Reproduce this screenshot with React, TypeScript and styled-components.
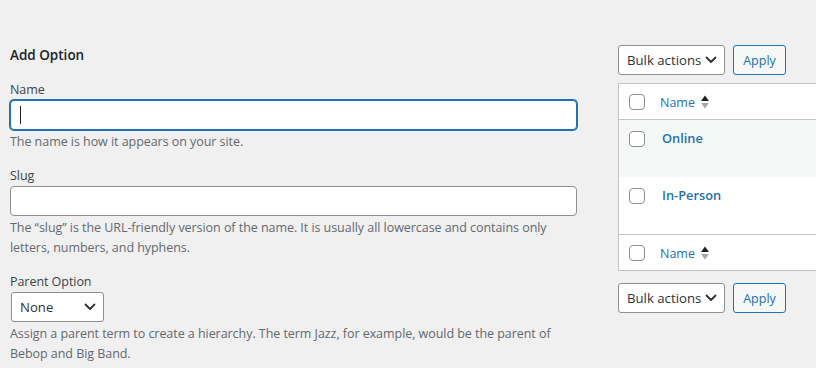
import React from "react";
import styled, { createGlobalStyle } from "styled-components";

const Global = createGlobalStyle`
  html, body { margin: 0; padding: 0; background: #f0f0f1; overflow: hidden; }
  body { font-family: "Open Sans", "Noto Sans", sans-serif; color: #3c434a; font-size: 12.5px; }
  * { box-sizing: border-box; }
`;

const Page = styled.div`
  display: grid;
  grid-template-columns: 567px 320px;
  column-gap: 41px;
  padding: 45px 0 0 10px;
  width: 1000px;
  height: 368px;
`;

const LeftCol = styled.div`
  display: flex;
  flex-direction: column;
`;

const Heading = styled.h2`
  margin: 0 0 14px;
  font-size: 13.5px;
  font-weight: 600;
  line-height: 20px;
  color: #1d2327;
`;

const Field = styled.div`
  display: flex;
  flex-direction: column;
  margin-bottom: 13px;
`;

const Label = styled.label`
  display: block;
  font-size: 12.5px;
  line-height: 20px;
  margin-top: 1px;
  margin-bottom: 0;
  letter-spacing: -0.05px;
`;

const TextInput = styled.div<{ $focus?: boolean }>`
  position: relative;
  height: 30px;
  width: 567px;
  background: #fff;
  border-radius: 4px;
  border: 1px solid ${(p) => (p.$focus ? "#2271b1" : "#8c8f94")};
  box-shadow: ${(p) => (p.$focus ? "0 0 0 1px #2271b1" : "none")};
`;

const Caret = styled.span`
  position: absolute;
  left: 9px;
  top: 5px;
  width: 1px;
  height: 18px;
  background: #1d2327;
`;

const Desc = styled.p`
  margin: 2px 0 0;
  font-size: 12.5px;
  line-height: 20px;
  letter-spacing: -0.05px;
  color: #646970;
  white-space: nowrap;
`;

const SelectBox = styled.div<{ $w: number; $ml?: number }>`
  display: flex;
  align-items: center;
  justify-content: space-between;
  width: ${(p) => p.$w}px;
  margin-left: ${(p) => p.$ml ?? 0}px;
  height: 30px;
  padding: 0 7px 0 8px;
  background: #fff;
  border: 1px solid #8c8f94;
  border-radius: 3px;
  font-size: 13.2px;
  color: #2c3338;
  white-space: nowrap;
`;

const RightCol = styled.div`
  display: flex;
  flex-direction: column;
`;

const TableNav = styled.div<{ $mt?: number }>`
  display: flex;
  gap: 8px;
  height: 30px;
  margin-top: ${(p) => p.$mt ?? 0}px;
`;

const ApplyButton = styled.button`
  width: 53px;
  height: 30px;
  padding: 0;
  background: #f6f7f7;
  border: 1px solid #2271b1;
  border-radius: 3px;
  color: #2271b1;
  font-family: inherit;
  font-size: 12.5px;
`;

const Table = styled.div`
  margin-top: 8px;
  border: 1px solid #c3c4c7;
  background: #fff;
  display: flex;
  flex-direction: column;
`;

const HeadRow = styled.div<{ $top?: boolean }>`
  display: flex;
  align-items: center;
  height: 36px;
  padding: 1px 0 0 10px;
  border-top: ${(p) => (p.$top ? "1px solid #c3c4c7" : "none")};
  border-bottom: ${(p) => (p.$top ? "none" : "1px solid #c3c4c7")};
`;

const BodyRow = styled.div<{ $alt?: boolean }>`
  display: flex;
  align-items: flex-start;
  height: 57px;
  padding: 11px 0 0 10px;
  background: ${(p) => (p.$alt ? "#f6f7f7" : "#fff")};
`;

const Check = styled.span`
  display: inline-block;
  width: 16px;
  height: 16px;
  border: 1px solid #8c8f94;
  border-radius: 4px;
  background: #fff;
  flex: none;
`;

const SortLink = styled.span`
  display: flex;
  align-items: center;
  gap: 6px;
  margin-left: 15px;
  color: #2271b1;
  font-size: 12.5px;
`;

const RowTitle = styled.span`
  margin-left: 17px;
  margin-top: -3px;
  color: #2271b1;
  font-weight: 600;
  font-size: 12.8px;
  line-height: 20px;
`;

const Chevron = () => (
  <svg width="12" height="8" viewBox="0 0 12 8" fill="none">
    <path d="M1.5 1.5 L6 6 L10.5 1.5" stroke="#2c3338" strokeWidth="1.8" strokeLinecap="round" strokeLinejoin="round" />
  </svg>
);

const SortIcon = () => (
  <svg width="8" height="14" viewBox="0 0 8 14">
    <path d="M4 0.5 L8 6 L0 6 Z" fill="#1d2327" />
    <path d="M4 13.5 L8 8 L0 8 Z" fill="#a7aaad" />
  </svg>
);

const BulkNav = ({ mt }: { mt?: number }) => (
  <TableNav $mt={mt}>
    <SelectBox $w={107}>
      <span>Bulk actions</span>
      <Chevron />
    </SelectBox>
    <ApplyButton>Apply</ApplyButton>
  </TableNav>
);

export default function App() {
  return (
    <>
      <Global />
      <Page>
        <LeftCol>
          <Heading>Add Option</Heading>
          <Field>
            <Label>Name</Label>
            <TextInput $focus>
              <Caret />
            </TextInput>
            <Desc>The name is how it appears on your site.</Desc>
          </Field>
          <Field>
            <Label>Slug</Label>
            <TextInput />
            <Desc>
              The “slug” is the URL-friendly version of the name. It is usually all lowercase and contains only
              <br />
              letters, numbers, and hyphens.
            </Desc>
          </Field>
          <Field>
            <Label>Parent Option</Label>
            <SelectBox $w={93} $ml={1}>
              <span>None</span>
              <Chevron />
            </SelectBox>
            <Desc>
              Assign a parent term to create a hierarchy. The term Jazz, for example, would be the parent of
              <br />
              Bebop and Big Band.
            </Desc>
          </Field>
        </LeftCol>
        <RightCol>
          <BulkNav />
          <Table>
            <HeadRow>
              <Check />
              <SortLink>
                Name <SortIcon />
              </SortLink>
            </HeadRow>
            <BodyRow $alt>
              <Check />
              <RowTitle>Online</RowTitle>
            </BodyRow>
            <BodyRow>
              <Check />
              <RowTitle>In-Person</RowTitle>
            </BodyRow>
            <HeadRow $top>
              <Check />
              <SortLink>
                Name <SortIcon />
              </SortLink>
            </HeadRow>
          </Table>
          <BulkNav mt={12} />
        </RightCol>
      </Page>
    </>
  );
}
